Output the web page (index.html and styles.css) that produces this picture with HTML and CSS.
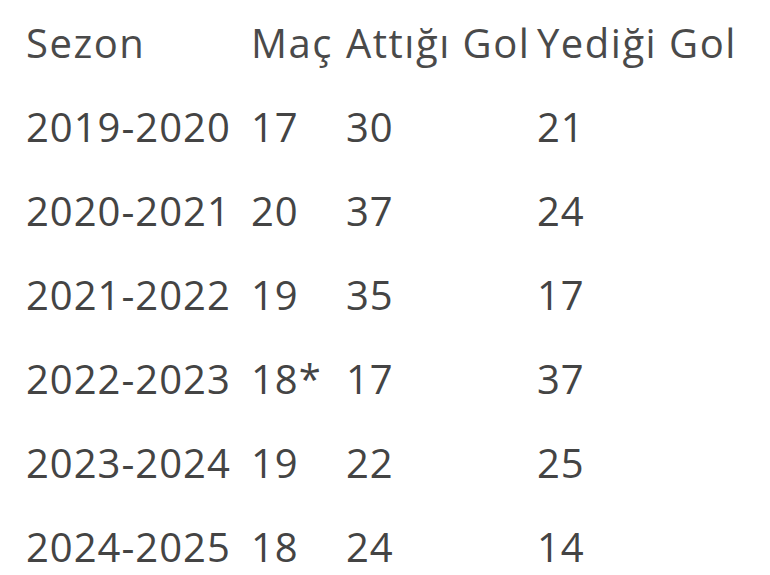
FILE: index.html
```html
<!DOCTYPE html>
<html lang="tr">
<head>
<meta charset="utf-8">
<title>Sezon</title>
<link rel="stylesheet" href="styles.css">
</head>
<body>
<table class="stats">
  <thead>
    <tr><th class="c1">Sezon</th><th class="c2">Maç</th><th class="c3">Attığı Gol</th><th class="c4">Yediği Gol</th></tr>
  </thead>
  <tbody>
    <tr><td>2019-2020</td><td>17</td><td>30</td><td>21</td></tr>
    <tr><td>2020-2021</td><td>20</td><td>37</td><td>24</td></tr>
    <tr><td>2021-2022</td><td>19</td><td>35</td><td>17</td></tr>
    <tr><td>2022-2023</td><td>18*</td><td>17</td><td>37</td></tr>
    <tr><td>2023-2024</td><td>19</td><td>22</td><td>25</td></tr>
    <tr><td>2024-2025</td><td>18</td><td>24</td><td>14</td></tr>
  </tbody>
</table>
</body>
</html>
```
FILE: styles.css
```css
html, body {
  margin: 0;
  padding: 0;
  background: #ffffff;
}
body {
  font-family: "Open Sans", "Liberation Sans", sans-serif;
  color: #444444;
}
.stats {
  border-collapse: collapse;
  table-layout: fixed;
  margin-left: 26px;
}
.stats th, .stats td {
  height: 84px;
  padding: 0;
  font-size: 40px;
  font-weight: 400;
  text-align: left;
  white-space: nowrap;
  vertical-align: middle;
}
.stats td {
  letter-spacing: 1px;
}
.stats th {
  letter-spacing: 1.5px;
  color: #4a4a4a;
}
.c1 { width: 225px; }
.c2 { width: 95px; }
.c3 { width: 191px; }
.c4 { width: 230px; }
```
